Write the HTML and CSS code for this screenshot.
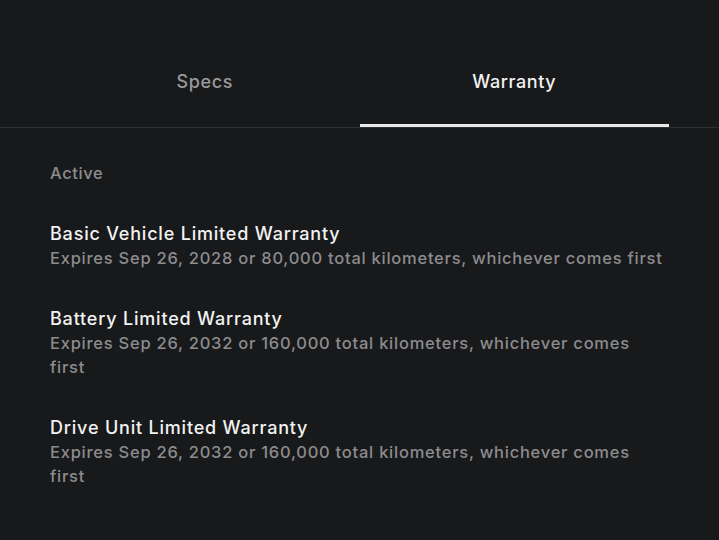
FILE: index.html
```html
<!DOCTYPE html>
<html lang="en">
<head>
    <meta charset="UTF-8">
    <title>Warranty</title>
    <link rel="stylesheet" href="styles.css">
</head>
<body>
    <div class="tabs">
        <div class="tab">Specs</div>
        <div class="tab active">Warranty</div>
    </div>

    <div class="content">
        <div class="section-label">Active</div>

        <div class="warranty">
            <div class="warranty-title">Basic Vehicle Limited Warranty</div>
            <div class="warranty-text">Expires Sep 26, 2028 or 80,000 total kilometers, whichever comes first</div>
        </div>
        <div class="warranty">
            <div class="warranty-title">Battery Limited Warranty</div>
            <div class="warranty-text">Expires Sep 26, 2032 or 160,000 total kilometers, whichever comes first</div>
        </div>
        <div class="warranty">
            <div class="warranty-title">Drive Unit Limited Warranty</div>
            <div class="warranty-text">Expires Sep 26, 2032 or 160,000 total kilometers, whichever comes first</div>
        </div>
    </div>
</body>
</html>
```

FILE: styles.css
```css
:root {
    --bg: #18191b;
    --text: #f2f2f2;
    --text-secondary: #8c8c8e;
    --tab-muted: #9a9a9c;
    --divider: #2f3032;
}

* {
    box-sizing: border-box;
}

body {
    font-family: Inter, "Noto Sans", sans-serif;
    background: var(--bg);
    color: var(--text);
    margin: 0;
    min-height: 100vh;
}

.tabs {
    display: flex;
    padding: 0 50px;
    border-bottom: 1px solid var(--divider);
}

.tab {
    flex: 1;
    height: 127px;
    padding-top: 71px;
    text-align: center;
    font-size: 18px;
    font-weight: 500;
    letter-spacing: 0.6px;
    color: var(--tab-muted);
    border-bottom: 3px solid transparent;
}

.tab.active {
    color: var(--text);
    border-bottom-color: #e8e8e8;
}

.content {
    padding: 33px 50px 0;
}

.section-label {
    font-size: 16.5px;
    font-weight: 500;
    letter-spacing: 0.6px;
    color: var(--text-secondary);
    line-height: 24px;
    margin-bottom: 36px;
}

.warranty {
    margin-bottom: 36px;
}

.warranty-title {
    font-size: 18px;
    font-weight: 500;
    letter-spacing: 0.8px;
    line-height: 25px;
}

.warranty-text {
    font-size: 16.5px;
    font-weight: 500;
    letter-spacing: 0.75px;
    line-height: 24px;
    color: var(--text-secondary);
}
```
